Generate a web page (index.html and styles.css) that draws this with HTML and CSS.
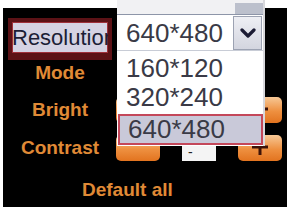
FILE: index.html
```html
<!DOCTYPE html>
<html lang="en">
<head>
  <meta charset="UTF-8">
  <title>Camera settings</title>
  <link rel="stylesheet" href="styles.css">
</head>
<body>
  <div class="panel">
    <div class="row row-res">
      <div class="label label-sel">Resolution</div>
    </div>
    <div class="row row-mode">
      <div class="label">Mode</div>
    </div>
    <div class="row row-bright">
      <div class="label">Bright</div>
      <div class="controls">
        <div class="btn"></div>
        <div class="value"></div>
        <div class="btn">
          <svg width="18" height="18" viewBox="0 0 18 18"><path d="M9 1 V17 M1 9 H17" stroke="#3c1208" stroke-width="3"/></svg>
        </div>
      </div>
    </div>
    <div class="row row-contrast">
      <div class="label">Contrast</div>
      <div class="controls">
        <div class="btn"></div>
        <div class="value">-</div>
        <div class="btn">
          <svg width="18" height="18" viewBox="0 0 18 18"><path d="M9 1 V17 M1 9 H17" stroke="#3c1208" stroke-width="3"/></svg>
        </div>
      </div>
    </div>
    <div class="row row-default">
      <div class="default">Default all</div>
    </div>

    <!-- open resolution dropdown -->
    <div class="combo">
      <div class="combo-top"><span class="combo-grip"></span></div>
      <div class="combo-field">
        <span class="combo-text">640*480</span>
        <span class="combo-arrow">
          <svg width="16" height="10" viewBox="0 0 16 10"><path d="M2 2 L8 8 L14 2" fill="none" stroke="#1b1b33" stroke-width="3.2" stroke-linecap="round" stroke-linejoin="round"/></svg>
        </span>
      </div>
      <ul class="combo-list">
        <li>160*120</li>
        <li>320*240</li>
        <li class="active">640*480</li>
      </ul>
    </div>
  </div>
</body>
</html>
```

FILE: styles.css
```css
* {
  margin: 0;
  padding: 0;
  box-sizing: border-box;
}
body {
  background: #fff;
  font-family: "Liberation Sans", Arial, sans-serif;
  width: 287px;
  height: 207px;
  overflow: hidden;
}
.panel {
  position: relative;
  margin: 8px 0 0 3px;
  width: 284px;
  height: 199px;
  background: #000;
  padding: 10px 0 0 5px;
}
.row {
  display: flex;
  align-items: center;
  gap: 4px;
}
.row-res { height: 42px; }
.row-mode { height: 26px; }
.row-bright { height: 47px; }
.row-contrast { height: 30px; }
.row-default {
  height: 30px;
  margin-top: 12px;
  padding-left: 74px;
}
.label {
  width: 104px;
  text-align: center;
  color: #e08a36;
  font-weight: bold;
  font-size: 19px;
}
.label-sel {
  height: 42px;
  line-height: 32px;
  background: #d5d3e3;
  color: #1c1e36;
  font-weight: normal;
  font-size: 22px;
  text-align: left;
  padding-left: 0;
  white-space: nowrap;
  overflow: hidden;
  border: 4px solid #5c1216;
  border-bottom-width: 7px;
  box-shadow: inset 0 0 0 1px #a0303a;
}
.controls {
  display: flex;
  align-items: center;
  gap: 22px;
}
.btn {
  width: 44px;
  height: 26px;
  border-radius: 5px;
  background: linear-gradient(#f7c896, #ee9040 55%, #e2731f);
  display: flex;
  align-items: center;
  justify-content: center;
  padding-bottom: 2px;
}
.value {
  width: 34px;
  height: 26px;
  background: #f4f4f4;
  color: #222;
  font-size: 14px;
  line-height: 34px;
  padding-left: 6px;
}
.default {
  color: #e08a36;
  font-weight: bold;
  font-size: 19px;
}

.combo {
  position: absolute;
  left: 114px;
  top: -8px;
  width: 148px;
  height: 146px;
  background: #fff;
  border-right: 2px solid #d8d8dc;
}
.combo-top {
  height: 14px;
  background: #f1f1f3;
  position: relative;
}
.combo-grip {
  position: absolute;
  left: 118px;
  top: 3px;
  width: 28px;
  height: 11px;
  background: #bcc0cc;
}
.combo-field {
  height: 37px;
  border-top: 1px solid #8d95a8;
  border-bottom: 1px solid #c8ccd6;
  display: flex;
  align-items: center;
  justify-content: space-between;
  padding-left: 9px;
}
.combo-text,
.combo-list li {
  font-size: 26px;
  color: #3a3a46;
}
.combo-text {
  padding-top: 2px;
}
.combo-arrow {
  width: 29px;
  height: 34px;
  margin-right: 1px;
  border: 1px solid #9ca2b2;
  background: linear-gradient(#eeeff4, #d3d5df);
  display: flex;
  align-items: center;
  justify-content: center;
}
.combo-list {
  list-style: none;
  padding-top: 3px;
}
.combo-list li {
  height: 29px;
  line-height: 29px;
  padding-left: 9px;
}
.combo-list li.active {
  height: 31px;
  line-height: 27px;
  margin-top: 2px;
  padding-left: 8px;
  margin-left: 1px;
  background: #c9c9d9;
  border: 2px solid #c4485a;
}
```
